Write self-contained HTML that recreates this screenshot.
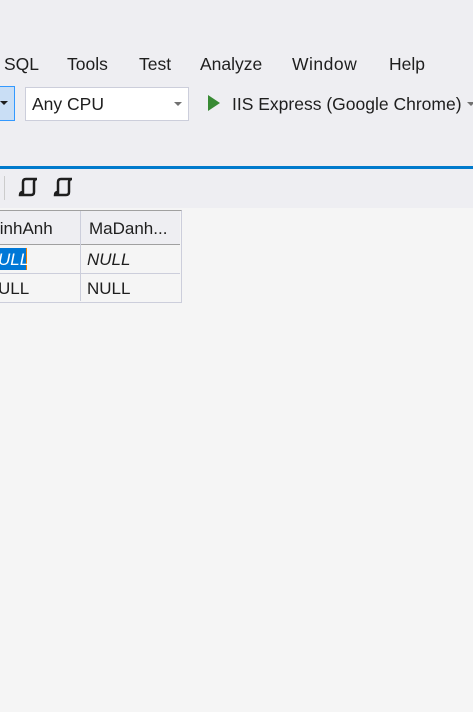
<!DOCTYPE html><html><head><style>
body{margin:0;width:473px;height:712px;overflow:hidden;background:#f5f5f5;font-family:"Segoe UI","Liberation Sans",sans-serif;position:relative;color:#1e1e1e}
.a{position:absolute}
.m{font-size:17.5px;top:54px}
</style></head><body>
<div class="a" style="left:0;top:0;width:473px;height:208px;background:#eeeef2"></div>
<div class="a m" style="left:4px">SQL</div>
<div class="a m" style="left:67px">Tools</div>
<div class="a m" style="left:139px">Test</div>
<div class="a m" style="left:200px">Analyze</div>
<div class="a m" style="left:292px;letter-spacing:0.5px">Window</div>
<div class="a m" style="left:389px">Help</div>
<div class="a" style="left:-2px;top:86px;width:15px;height:33px;background:#c9def5;border:1px solid #3399ff"></div>
<div class="a" style="left:0;top:101px;border:4px solid transparent;border-top:4px solid #1e1e1e;border-bottom:0"></div>
<div class="a" style="left:25px;top:87px;width:162px;height:32px;background:#fff;border:1px solid #cccedb"></div>
<div class="a" style="left:32px;top:94px;font-size:17.5px">Any CPU</div>
<div class="a" style="left:174px;top:102px;border:4px solid transparent;border-top:4px solid #717171;border-bottom:0"></div>
<div class="a" style="left:208px;top:95px;border-left:12px solid #388a34;border-top:8px solid transparent;border-bottom:8px solid transparent"></div>
<div class="a" style="left:232px;top:94px;font-size:17.5px">IIS Express (Google Chrome)</div>
<div class="a" style="left:467px;top:102px;border:4px solid transparent;border-top:4px solid #717171;border-bottom:0"></div>
<div class="a" style="left:0;top:166px;width:473px;height:3px;background:#007acc"></div>
<div class="a" style="left:4px;top:176px;width:1px;height:24px;background:#ccc"></div>
<svg class="a" style="left:17px;top:177px" width="60" height="22"><g fill="none" stroke="#1e1e1e" stroke-width="2.5"><path d="M6 18V5Q6 2 9 2H20Q17 2 17 5V15Q17 18 14 18H3Q3 15 6 15"/><path d="M41 18V5Q41 2 44 2H55Q52 2 52 5V15Q52 18 49 18H38Q38 15 41 15"/></g></svg>
<div class="a" style="left:-1px;top:210px;width:181px;height:91px;border:1px solid #cccedb;border-top:1px solid #a0a0a0"></div>
<div class="a" style="left:0;top:211px;width:180px;height:33px;background:#eeeef2;border-bottom:1px solid #a0a0a0"></div>
<div class="a" style="left:80px;top:211px;width:1px;height:90px;background:#cccedb"></div>
<div class="a" style="left:0;top:273px;width:180px;height:1px;background:#cccedb"></div>
<div class="a" style="left:-4px;top:219px;font-size:17px">linhAnh</div>
<div class="a" style="left:89px;top:219px;font-size:17px">MaDanh...</div>
<div class="a" style="left:0;top:248px;width:26px;height:22px;background:#0078d7;border-right:1px solid #f08000"></div>
<div class="a" style="left:-2px;top:250px;font-size:17px;font-style:italic;color:#fff">ULL</div>
<div class="a" style="left:87px;top:250px;font-size:17px;font-style:italic">NULL</div>
<div class="a" style="left:-2px;top:279px;font-size:17px">ULL</div>
<div class="a" style="left:87px;top:279px;font-size:17px">NULL</div>
</body></html>
